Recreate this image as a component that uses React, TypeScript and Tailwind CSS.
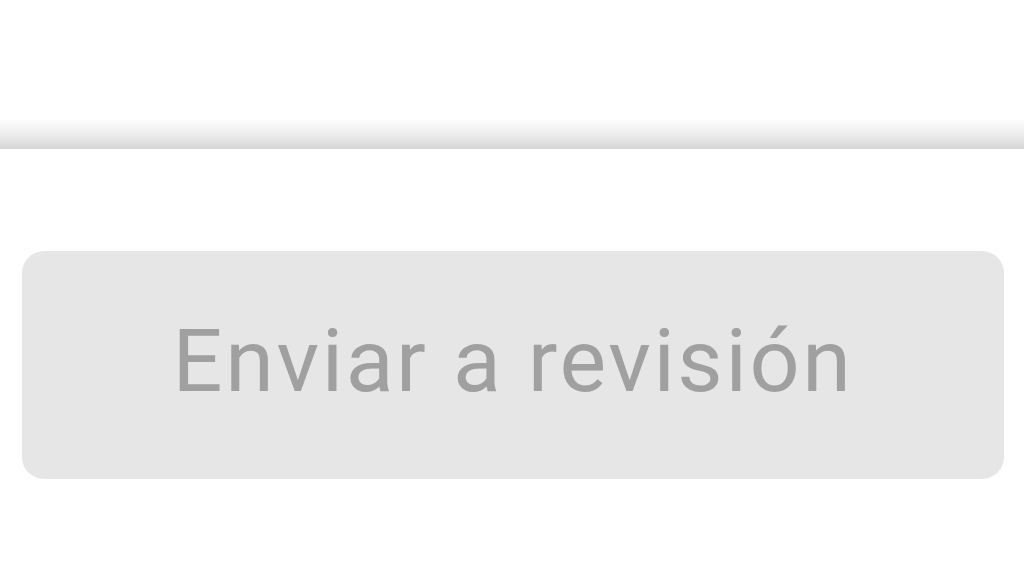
export default function App() {
  return (
    <div className="flex h-[576px] w-[1024px] flex-col bg-white" style={{ fontFamily: 'Roboto, "Noto Sans", sans-serif' }}>
      <div className="h-[120px] shrink-0 bg-white" />
      <div className="h-[29px] shrink-0 bg-gradient-to-b from-[#fdfdfd] via-[#ececec] to-[#d6d6d6]" />
      <footer className="flex flex-1 flex-col bg-white pl-[22px] pr-[20px] pt-[102px]">
        <button
          type="button"
          disabled
          className="flex h-[228px] w-full items-center justify-center rounded-[22px] bg-[#e6e6e6] pb-[8px] text-[88px] font-normal tracking-[2.6px] text-[#a0a0a0]"
        >
          Enviar a revisión
        </button>
      </footer>
    </div>
  );
}
